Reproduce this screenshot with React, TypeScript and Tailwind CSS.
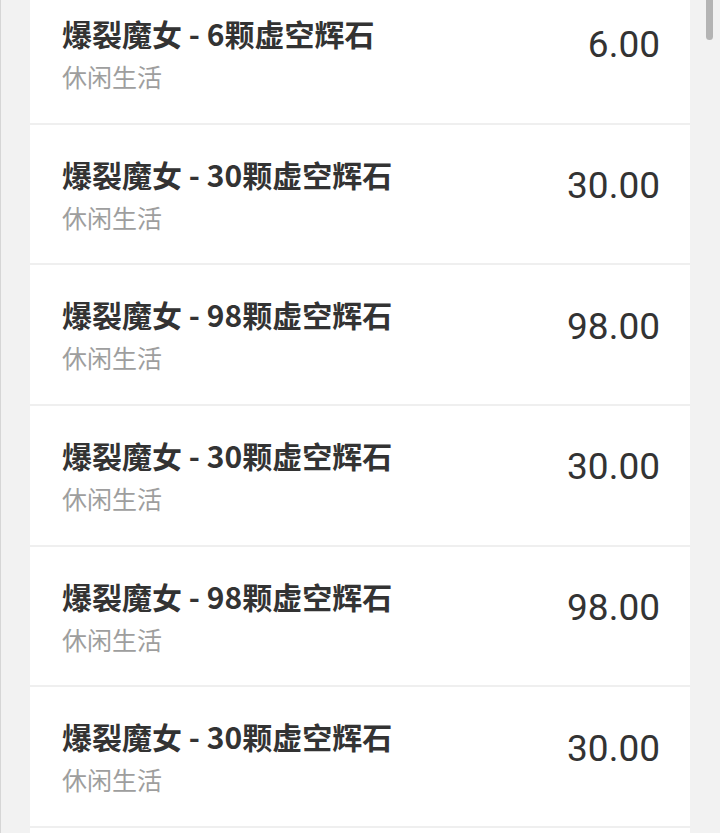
import React from 'react';

interface Order {
  stones: number;
  price: string;
}

const orders: Order[] = [
  { stones: 6, price: '6.00' },
  { stones: 30, price: '30.00' },
  { stones: 98, price: '98.00' },
  { stones: 30, price: '30.00' },
  { stones: 98, price: '98.00' },
  { stones: 30, price: '30.00' },
];

const OrderRow: React.FC<{ order: Order }> = ({ order }) => (
  <div className="h-[140.7px] border-b-2 border-[#efefef] pl-8 pr-[30px] flex items-center justify-between">
    <div className="flex flex-col">
      <span className="text-[30px] leading-[36px] font-bold text-[#333]">
        爆裂魔女 - {order.stones}颗虚空辉石
      </span>
      <span className="text-[25px] leading-[32px] mt-[9px] text-[#9e9e9e]">休闲生活</span>
    </div>
    <span className="mb-[17px] text-[37px] leading-none text-[#333] font-['Roboto',sans-serif]">
      {order.price}
    </span>
  </div>
);

export default function App() {
  return (
    <div className="relative h-[833px] overflow-hidden bg-[#f2f2f2] border-l border-[#d6d6d6] font-['Noto_Sans_CJK_SC','Noto_Sans',sans-serif]">
      <div className="ml-[29px] mr-[30px] -mt-[16px] bg-white">
        {orders.map((o, i) => (
          <OrderRow key={i} order={o} />
        ))}
        {/* next row, scrolled out of view */}
        <div className="h-[40px]" />
      </div>
      {/* scrollbar thumb */}
      <div className="absolute right-[7px] top-0 w-[7px] h-[40px] rounded-b-full bg-[#b4b4b4]" />
    </div>
  );
}
